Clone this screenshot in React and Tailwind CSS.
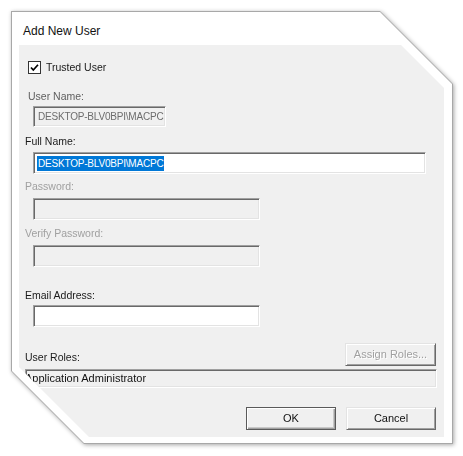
import React from 'react';

const font = { fontFamily: '"Liberation Sans", Arial, sans-serif' };

function Sunken({ className = '', children }) {
  return (
    <div
      className={`border border-t-[#a0a0a0] border-l-[#a0a0a0] border-b-white border-r-white shadow-[inset_1px_1px_0_#696969,inset_-1px_-1px_0_#e3e3e3] overflow-hidden flex items-center ${className}`}
    >
      {children}
    </div>
  );
}

function Button({ label, primary, disabled, className = '' }) {
  return (
    <div
      className={`flex items-center justify-center text-[11px] bg-[#f0f0f0] ${
        primary
          ? 'border border-[#5a5a5a] shadow-[inset_1px_1px_0_#ffffff,inset_-1px_-1px_0_#a0a0a0,inset_-2px_-2px_0_#c8c8c8]'
          : 'border border-t-[#e3e3e3] border-l-[#e3e3e3] border-b-[#696969] border-r-[#696969] shadow-[inset_1px_1px_0_#ffffff,inset_-1px_-1px_0_#a0a0a0]'
      } ${disabled ? 'text-[#a0a0a0] [text-shadow:1px_1px_0_#ffffff]' : 'text-[#111]'} ${className}`}
    >
      {label}
    </div>
  );
}

export default function App() {
  return (
    <div className="w-[463px] h-[456px] bg-white pt-[11px] pl-[11px]" style={font}>
      <div className="w-[442px] h-[433px] [filter:drop-shadow(1px_1px_2px_rgba(0,0,0,0.35))]">
        {/* frame outline */}
        <div className="w-full h-full bg-[#a8a8a8] p-px [clip-path:polygon(0_0,369px_0,442px_73px,442px_433px,73px_433px,0_360px)]">
          <div className="w-full h-full bg-white flex flex-col pl-[7px] pr-[8px] pb-[6px] [clip-path:polygon(0_0,368px_0,440px_72px,440px_431px,72px_431px,0_359px)]">
            <div className="h-[33px] flex items-center pl-[4px] pt-[4px] text-[12px] text-[#111]">
              Add New User
            </div>

            {/* client area */}
            <div className="w-[425px] h-[392px] bg-[#f0f0f0] flex flex-col [clip-path:polygon(0_0,382px_0,425px_43px,425px_392px,70px_392px,0_322px)]">
              <div className="mt-[16px] ml-[9px] h-[13px] flex items-center gap-[5px]">
                <div className="w-[13px] h-[13px] bg-white border border-[#333] flex items-center justify-center">
                  <svg width="11" height="11" viewBox="0 0 11 11">
                    <path d="M2 5.5 L4.3 8 L9 2.8" fill="none" stroke="#000" strokeWidth="1.7" />
                  </svg>
                </div>
                <span className="text-[10.5px] leading-[13px] text-[#1a1a1a]">Trusted User</span>
              </div>

              <div className="mt-[16px] ml-[9px] text-[10.5px] leading-[13px] text-[#5f5f5f]">User Name:</div>
              <Sunken className="mt-[3px] ml-[14px] w-[133px] h-[21px] bg-[#f0f0f0] pl-[4px]">
                <span className="text-[10px] tracking-[-0.2px] text-[#6d6d6d] whitespace-nowrap">DESKTOP-BLV0BPI\MACPC</span>
              </Sunken>

              <div className="mt-[8px] ml-[6px] text-[10.5px] leading-[13px] text-[#1a1a1a]">Full Name:</div>
              <Sunken className="mt-[4px] ml-[14px] w-[393px] h-[22px] bg-white pl-[3px]">
                <span className="text-[10px] tracking-[-0.2px] leading-[15px] bg-[#0078d7] text-white whitespace-nowrap px-px">DESKTOP-BLV0BPI\MACPC</span>
              </Sunken>

              <div className="mt-[6px] ml-[6px] text-[10.5px] leading-[13px] text-[#a0a0a0]">Password:</div>
              <Sunken className="mt-[5px] ml-[14px] w-[227px] h-[22px] bg-[#f0f0f0]" />

              <div className="mt-[7px] ml-[6px] text-[10.5px] leading-[13px] text-[#a0a0a0]">Verify Password:</div>
              <Sunken className="mt-[5px] ml-[14px] w-[227px] h-[22px] bg-[#f0f0f0]" />

              <div className="mt-[22px] ml-[6px] text-[10.5px] leading-[13px] text-[#1a1a1a]">Email Address:</div>
              <Sunken className="mt-[3px] ml-[14px] w-[227px] h-[22px] bg-white" />

              <div className="mt-[16px] ml-[6px] mr-[8px] flex items-end justify-between">
                <span className="mb-[2px] text-[10.5px] leading-[13px] text-[#1a1a1a]">User Roles:</span>
                <Button label="Assign Roles..." disabled className="w-[91px] h-[23px]" />
              </div>
              <Sunken className="mt-[3px] ml-[6px] w-[412px] h-[19px] bg-[#f0f0f0]">
                <span className="ml-[-1px] text-[11px] text-[#111] whitespace-nowrap">Application Administrator</span>
              </Sunken>

              <div className="mt-[19px] mr-[8px] flex justify-end gap-[10px]">
                <Button label="OK" primary className="w-[90px] h-[23px]" />
                <Button label="Cancel" className="w-[90px] h-[23px]" />
              </div>
            </div>
          </div>
        </div>
      </div>
    </div>
  );
}
